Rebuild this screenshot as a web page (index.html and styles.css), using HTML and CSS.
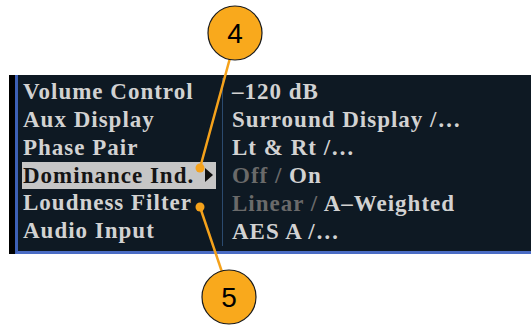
FILE: index.html
```html
<!DOCTYPE html>
<html>
<head>
<meta charset="utf-8">
<link rel="stylesheet" href="styles.css">
</head>
<body>
<div class="page">
  <div class="panel">
    <div class="inner">
      <div class="col labels">
        <div class="row">Volume Control</div>
        <div class="row">Aux Display</div>
        <div class="row">Phase Pair</div>
        <div class="row sel">Dominance Ind.<span class="tri"></span></div>
        <div class="row">Loudness Filter</div>
        <div class="row">Audio Input</div>
      </div>
      <div class="col values">
        <div class="row">–120 dB</div>
        <div class="row">Surround Display /…</div>
        <div class="row">Lt &amp; Rt /…</div>
        <div class="row"><span class="dim">Off / </span>On</div>
        <div class="row"><span class="dim">Linear / </span>A–Weighted</div>
        <div class="row">AES A /…</div>
      </div>
    </div>
  </div>
  <svg class="callouts" width="531" height="326" viewBox="0 0 531 326">
    <line x1="230" y1="58" x2="200" y2="168" class="lead"/>
    <circle cx="200" cy="168" r="4.5" class="dot"/>
    <circle cx="235" cy="33" r="27" class="bubble"/>
    <text x="235" y="43" class="num">4</text>
    <line x1="200" y1="207" x2="222" y2="272" class="lead"/>
    <circle cx="200" cy="207" r="4.5" class="dot"/>
    <circle cx="229" cy="297" r="27" class="bubble"/>
    <text x="229" y="307" class="num">5</text>
  </svg>
</div>
</body>
</html>
```
FILE: styles.css
```css
html, body {
  margin: 0;
  padding: 0;
  background: #ffffff;
}
.page {
  position: relative;
  width: 531px;
  height: 326px;
  overflow: hidden;
  padding-top: 75px;
  box-sizing: border-box;
}
.panel {
  margin-left: 9px;
  background: #000;
  padding-left: 6px;
}
.inner {
  display: flex;
  background: #0e1923;
  border-left: 3px solid #3d5fb4;
  border-bottom: 3px solid #4a6cc4;
  padding: 3px 0 5px 4px;
  font-family: "Liberation Serif", "Times New Roman", serif;
  font-weight: bold;
  font-size: 23px;
  letter-spacing: 1px;
  line-height: 28px;
  color: #d2d2d2;
}
.labels {
  width: 194px;
}
.labels .row {
  padding-left: 1px;
  white-space: nowrap;
}
.row.sel {
  position: relative;
  background: #c6c6c6;
  color: #141414;
  height: 27px;
  line-height: 28px;
}
.tri {
  position: absolute;
  right: 3px;
  top: 6px;
  width: 0;
  height: 0;
  border-top: 7px solid transparent;
  border-bottom: 7px solid transparent;
  border-left: 8px solid #101010;
}
.values {
  margin-left: 6px;
  padding-left: 9px;
  border-left: 1px solid #2b4a6e;
  white-space: nowrap;
}
.dim {
  color: #6a6a6a;
}
.callouts {
  position: absolute;
  left: 0;
  top: 0;
}
.lead {
  stroke: #f5a21b;
  stroke-width: 2.5;
}
.dot {
  fill: #f5a21b;
}
.bubble {
  fill: #f9a91c;
  stroke: #1a1a1a;
  stroke-width: 1.2;
}
.num {
  font-family: "Liberation Sans", Arial, sans-serif;
  font-size: 28px;
  text-anchor: middle;
  fill: #000;
}
```
